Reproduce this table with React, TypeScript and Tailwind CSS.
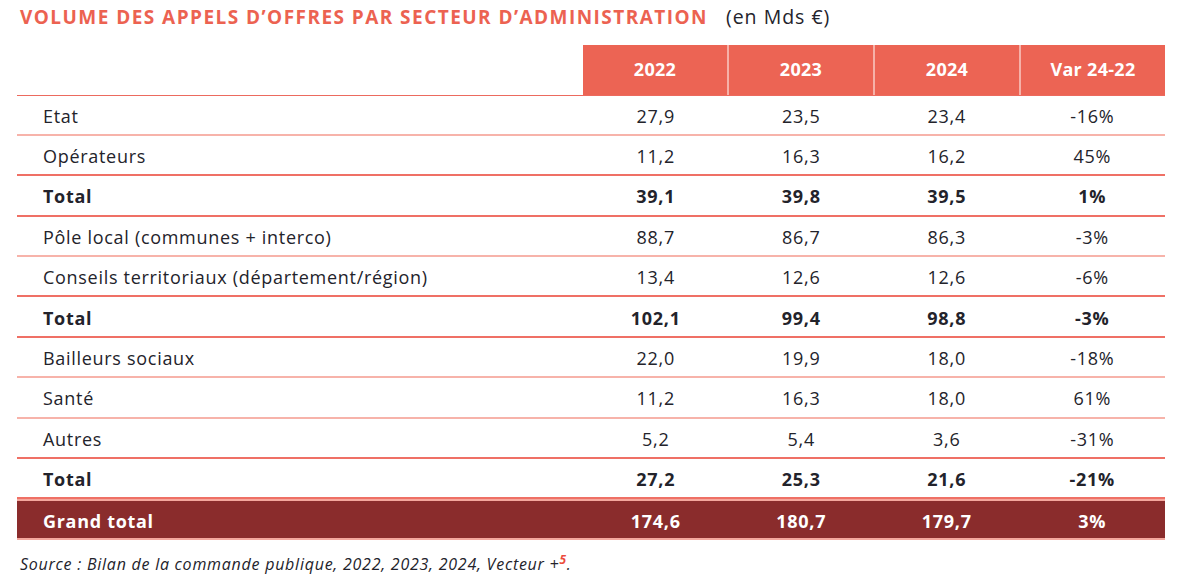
import React from "react";

type Row = { label: string; v: string[]; kind: "normal" | "total" | "grand" };

const rows: Row[] = [
  { label: "Etat", v: ["27,9", "23,5", "23,4", "-16%"], kind: "normal" },
  { label: "Opérateurs", v: ["11,2", "16,3", "16,2", "45%"], kind: "normal" },
  { label: "Total", v: ["39,1", "39,8", "39,5", "1%"], kind: "total" },
  { label: "Pôle local (communes + interco)", v: ["88,7", "86,7", "86,3", "-3%"], kind: "normal" },
  { label: "Conseils territoriaux (département/région)", v: ["13,4", "12,6", "12,6", "-6%"], kind: "normal" },
  { label: "Total", v: ["102,1", "99,4", "98,8", "-3%"], kind: "total" },
  { label: "Bailleurs sociaux", v: ["22,0", "19,9", "18,0", "-18%"], kind: "normal" },
  { label: "Santé", v: ["11,2", "16,3", "18,0", "61%"], kind: "normal" },
  { label: "Autres", v: ["5,2", "5,4", "3,6", "-31%"], kind: "normal" },
  { label: "Total", v: ["27,2", "25,3", "21,6", "-21%"], kind: "total" },
  { label: "Grand total", v: ["174,6", "180,7", "179,7", "3%"], kind: "grand" },
];

export default function App() {
  return (
    <div
      className="w-[1200px] h-[583px] bg-white text-[#23232b] overflow-hidden"
      style={{ fontFamily: '"Open Sans", "Liberation Sans", sans-serif' }}
    >
      <div className="pl-[20px] pt-[2px] flex items-baseline gap-[18px] h-[42px]">
        <span className="text-[#ec6251] font-bold text-[19px] tracking-[1.45px]">
          VOLUME DES APPELS D’OFFRES PAR SECTEUR D’ADMINISTRATION
        </span>
        <span className="text-[19.5px] tracking-[1px]">(en Mds €)</span>
      </div>

      <div className="ml-[17px] w-[1148px]">
        {/* header */}
        <div className="flex h-[53.5px] pt-[3px] border-b-[1.5px] border-[#ec6a5e]">
          <div className="w-[566px]" />
          {["2022", "2023", "2024", "Var 24-22"].map((h, i) => (
            <div
              key={h}
              className={`flex-1 flex items-center justify-center bg-[#ec6454] text-white font-bold text-[18px] tracking-[0.3px] ${
                i > 0 ? "border-l-2 border-[#f6b1a8]" : ""
              }`}
            >
              {h}
            </div>
          ))}
        </div>

        {rows.map((r, idx) => {
          const grand = r.kind === "grand";
          const bold = r.kind !== "normal";
          const next = rows[idx + 1];
          const redLine = r.kind === "total" || (next && next.kind !== "normal");
          return (
            <div
              key={idx}
              className={`flex h-[40.4px] items-center pt-[3px] ${
                grand
                  ? "bg-[#8a2c2c] text-white border-y-2 border-[#f4a79d]"
                  : redLine
                  ? "border-b-2 border-[#ef7065]"
                  : "border-b-2 border-[#f7b3aa]"
              } ${bold ? "font-bold" : ""} text-[18px] tracking-[0.7px]`}
            >
              <div className="w-[566px] pl-[26px]">{r.label}</div>
              {r.v.map((v, i) => (
                <div key={i} className="flex-1 text-center">
                  {v}
                </div>
              ))}
            </div>
          );
        })}
      </div>

      <div className="pl-[20px] pt-[12px] italic text-[16px] tracking-[0.75px] text-[#23232b]">
        Source : Bilan de la commande publique, 2022, 2023, 2024, Vecteur +
        <sup className="text-[#ec4b3d] font-bold text-[12px]">5</sup>.
      </div>
    </div>
  );
}
